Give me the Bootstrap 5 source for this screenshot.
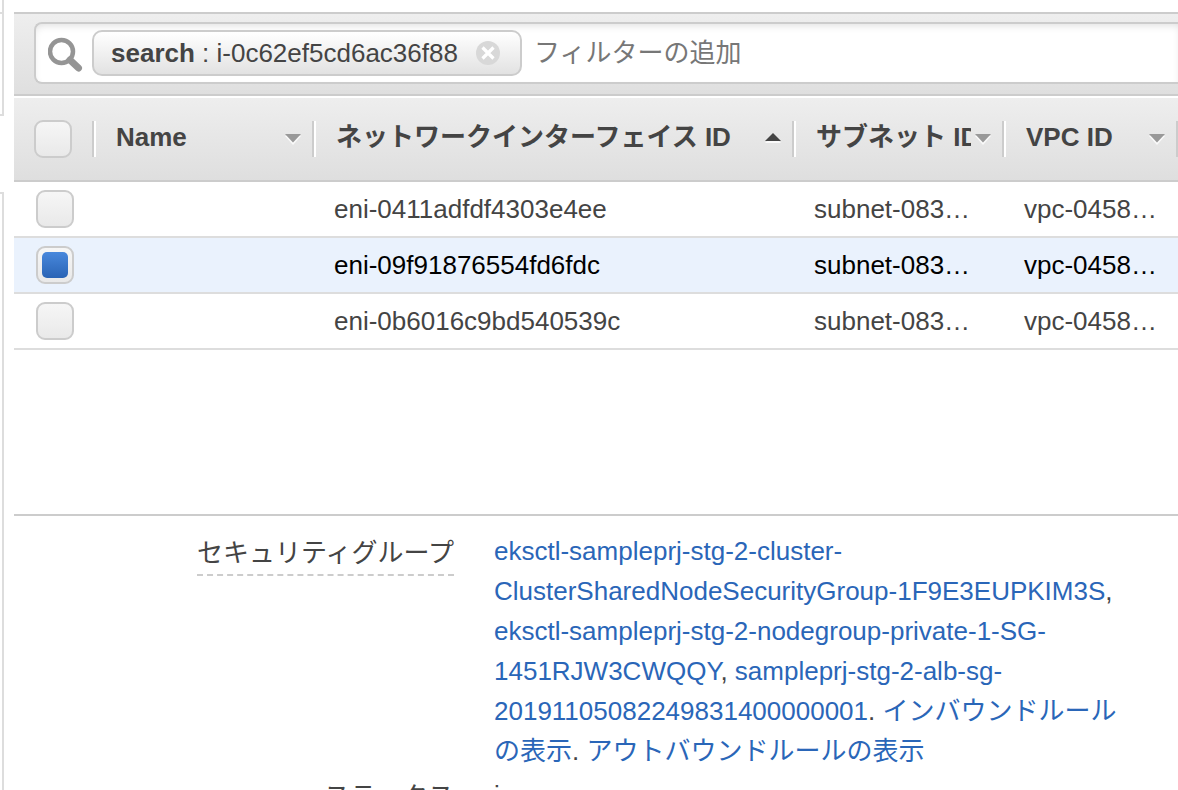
<!DOCTYPE html>
<html lang="ja">
<head>
<meta charset="utf-8">
<meta name="viewport" content="width=device-width, initial-scale=1">
<title>ネットワークインターフェイス</title>
<link href="https://cdn.jsdelivr.net/npm/bootstrap@5.3.0/dist/css/bootstrap.min.css" rel="stylesheet">
<style>
  body {
    font-family: "Liberation Sans", "Noto Sans CJK JP", sans-serif;
    font-size: 26px;
    line-height: 40px;
    color: #444;
    background: #fff;
  }
  .rail { width: 4px; margin-right: 10px; }
  .rail-box { border-right: 2px solid #ddd; }
  .rail-head { height: 14px; border-bottom: 2px solid #ddd; }
  .rail-mid { height: 102px; border-bottom: 2px solid #ddd; }
  .rail-main { margin-top: 76px; border-top: 2px solid #ddd; }

  .console { padding-top: 12px; min-width: 0; }
  .filter-bar {
    padding: 8px 0 10px 20px;
    border-top: 2px solid #ccc;
    border-bottom: 2px solid #ccc;
    background: linear-gradient(#eee, #dfdfdf);
  }
  .search-box {
    height: 62px;
    padding-left: 12px;
    border: 2px solid #ccc;
    border-right: 0;
    border-radius: 8px 0 0 8px;
    background: #fff;
    box-shadow: inset 0 4px 8px -3px rgba(0, 0, 0, .14);
  }
  .search-icon { margin-right: 8px; }
  .chip {
    height: 46px;
    padding: 0 20px 0 17px;
    border: 2px solid #ccc;
    border-radius: 10px;
    background: linear-gradient(#fff, #e2e2e2);
  }
  .chip-close { width: 24px; height: 24px; margin-left: 18px; }
  .filter-input, .filter-input:focus {
    padding: 0 0 0 12px;
    border: 0;
    background: transparent;
    box-shadow: none;
    font-size: 26px;
    line-height: 40px;
    color: #444;
  }
  .filter-input::placeholder { color: #777; opacity: 1; }

  .eni-table {
    table-layout: fixed;
    border-collapse: separate;
    border-spacing: 0;
    width: 100%;
    margin-top: 2px;
  }
  .eni-table thead {
    background: linear-gradient(#eee, #dedede);
  }
  .eni-table th {
    height: 84px;
    padding: 0;
    border-bottom: 2px solid #ccc;
    white-space: nowrap;
  }
  .eni-table td {
    height: 56px;
    padding: 0 0 0 22px;
    border-bottom: 2px solid #ddd;
    white-space: nowrap;
  }
  .eni-table th:first-child { padding-left: 20px; }
  .head-cell {
    height: 36px;
    padding: 0 11px 0 20px;
    border-left: 2px solid #ccc;
    box-shadow: inset 2px 0 #fff;
  }
  .head-cell span { overflow: hidden; padding: 0 0 4px 2px; margin-right: 4px; }
  .picked td { background: #eaf2fd; color: #000; }

  .tick {
    appearance: none;
    display: block;
    width: 38px;
    height: 38px;
    margin: 0;
    border: 2px solid #ccc;
    border-radius: 9px;
    background: linear-gradient(#f6f6f6, #e9e9e9);
  }
  .tick:checked::before {
    content: "";
    display: block;
    width: 26px;
    height: 26px;
    margin: 4px;
    border-radius: 5px;
    background: linear-gradient(#4888dc, #2a64b5);
  }
  .col-tick { width: 78px; }
  .col-name { width: 220px; }
  .col-eni { width: 480px; }
  .col-subnet { width: 210px; }
  .col-vpc { width: 174px; }

  .list-pane { padding-bottom: 164px; }
  .detail-pane { padding-top: 15px; border-top: 2px solid #ccc; }
  .detail-row { gap: 40px; margin-bottom: 4px; }
  .detail-row dt { width: 440px; padding-top: 2px; font-weight: 400; text-align: right; }
  .detail-row dd { max-width: 636px; margin: 0; }
  .hint { display: inline-block; padding-bottom: 1px; border-bottom: 2px dashed #ccc; }
  .detail-row a { color: #2a66b8; text-decoration: none; }
</style>
</head>
<body>
<div class="d-flex vh-100 overflow-hidden">
  <aside class="rail d-flex flex-column flex-shrink-0">
    <div class="rail-box rail-head flex-shrink-0"></div>
    <div class="rail-box rail-mid flex-shrink-0"></div>
    <div class="rail-box rail-main flex-grow-1"></div>
  </aside>

  <main class="console flex-grow-1">
    <div class="filter-bar">
      <div class="search-box d-flex align-items-center">
        <svg class="search-icon flex-shrink-0" width="36" height="40" viewBox="0 0 36 40" fill="none" stroke="#959595" aria-hidden="true">
          <path d="M22 27 L30.500 35" stroke-width="7" stroke-linecap="round"/>
          <circle cx="13.500" cy="18.500" r="11.500" stroke-width="4.500"/>
        </svg>
        <div class="chip d-flex align-items-center flex-shrink-0">
          <span><b>search</b> : i-0c62ef5cd6ac36f88</span>
          <button type="button" class="chip-close btn p-0 border-0 d-flex" aria-label="削除">
            <svg width="24" height="24" viewBox="0 0 24 24" aria-hidden="true">
              <circle cx="12" cy="12" r="12" fill="#d8d8d8"/>
              <path d="M6.500 6.500 L17.500 17.500 M17.500 6.500 L6.500 17.500" stroke="#fff" stroke-width="3.200"/>
            </svg>
          </button>
        </div>
        <input type="text" class="filter-input form-control" placeholder="フィルターの追加" aria-label="フィルターの追加">
      </div>
    </div>

    <div class="list-pane">
      <table class="eni-table">
        <colgroup>
          <col class="col-tick"><col class="col-name"><col class="col-eni"><col class="col-subnet"><col class="col-vpc"><col>
        </colgroup>
        <thead>
          <tr>
            <th><input type="checkbox" class="tick" aria-label="すべて選択"></th>
            <th><div class="head-cell d-flex align-items-center"><span class="flex-grow-1">Name</span>
              <svg class="flex-shrink-0" width="16" height="12" viewBox="0 0 16 12" aria-hidden="true"><path d="M0 3h16L8 12z" fill="#fafafa"/><path d="M0 1h16L8 9.500z" fill="#999"/></svg></div></th>
            <th><div class="head-cell d-flex align-items-center"><span class="flex-grow-1">ネットワークインターフェイス ID</span>
              <svg class="flex-shrink-0" width="16" height="12" viewBox="0 0 16 12" aria-hidden="true"><path d="M0 10h16L8 2z" fill="#fafafa"/><path d="M0 8h16L8 0z" fill="#444"/></svg></div></th>
            <th><div class="head-cell d-flex align-items-center"><span class="flex-grow-1">サブネット ID</span>
              <svg class="flex-shrink-0" width="16" height="12" viewBox="0 0 16 12" aria-hidden="true"><path d="M0 3h16L8 12z" fill="#fafafa"/><path d="M0 1h16L8 9.500z" fill="#999"/></svg></div></th>
            <th><div class="head-cell d-flex align-items-center"><span class="flex-grow-1">VPC ID</span>
              <svg class="flex-shrink-0" width="16" height="12" viewBox="0 0 16 12" aria-hidden="true"><path d="M0 3h16L8 12z" fill="#fafafa"/><path d="M0 1h16L8 9.500z" fill="#999"/></svg></div></th>
            <th><div class="head-cell p-0"></div></th>
          </tr>
        </thead>
        <tbody>
          <tr>
            <td><input type="checkbox" class="tick" aria-label="eni-0411adfdf4303e4ee"></td>
            <td></td><td>eni-0411adfdf4303e4ee</td><td>subnet-083…</td><td>vpc-0458…</td><td class="p-0"></td>
          </tr>
          <tr class="picked">
            <td><input type="checkbox" class="tick" checked aria-label="eni-09f91876554fd6fdc"></td>
            <td></td><td>eni-09f91876554fd6fdc</td><td>subnet-083…</td><td>vpc-0458…</td><td class="p-0"></td>
          </tr>
          <tr>
            <td><input type="checkbox" class="tick" aria-label="eni-0b6016c9bd540539c"></td>
            <td></td><td>eni-0b6016c9bd540539c</td><td>subnet-083…</td><td>vpc-0458…</td><td class="p-0"></td>
          </tr>
        </tbody>
      </table>
    </div>

    <dl class="detail-pane m-0">
      <div class="detail-row d-flex">
        <dt class="flex-shrink-0"><span class="hint">セキュリティグループ</span></dt>
        <dd><a href="#">eksctl-sampleprj-stg-2-cluster-ClusterSharedNodeSecurityGroup-1F9E3EUPKIM3S</a>, <a href="#">eksctl-sampleprj-stg-2-nodegroup-private-1-SG-<wbr>1451RJW3CWQQY</a>, <a href="#">sampleprj-stg-2-alb-sg-<wbr>20191105082249831400000001</a>. <a href="#">インバウンドルールの表示</a>. <a href="#">アウトバウンドルールの表示</a></dd>
      </div>
      <div class="detail-row d-flex">
        <dt class="flex-shrink-0">ステータス</dt>
        <dd>in-use</dd>
      </div>
    </dl>
  </main>
</div>
<script src="https://cdn.jsdelivr.net/npm/bootstrap@5.3.0/dist/js/bootstrap.bundle.min.js"></script>
</body>
</html>
